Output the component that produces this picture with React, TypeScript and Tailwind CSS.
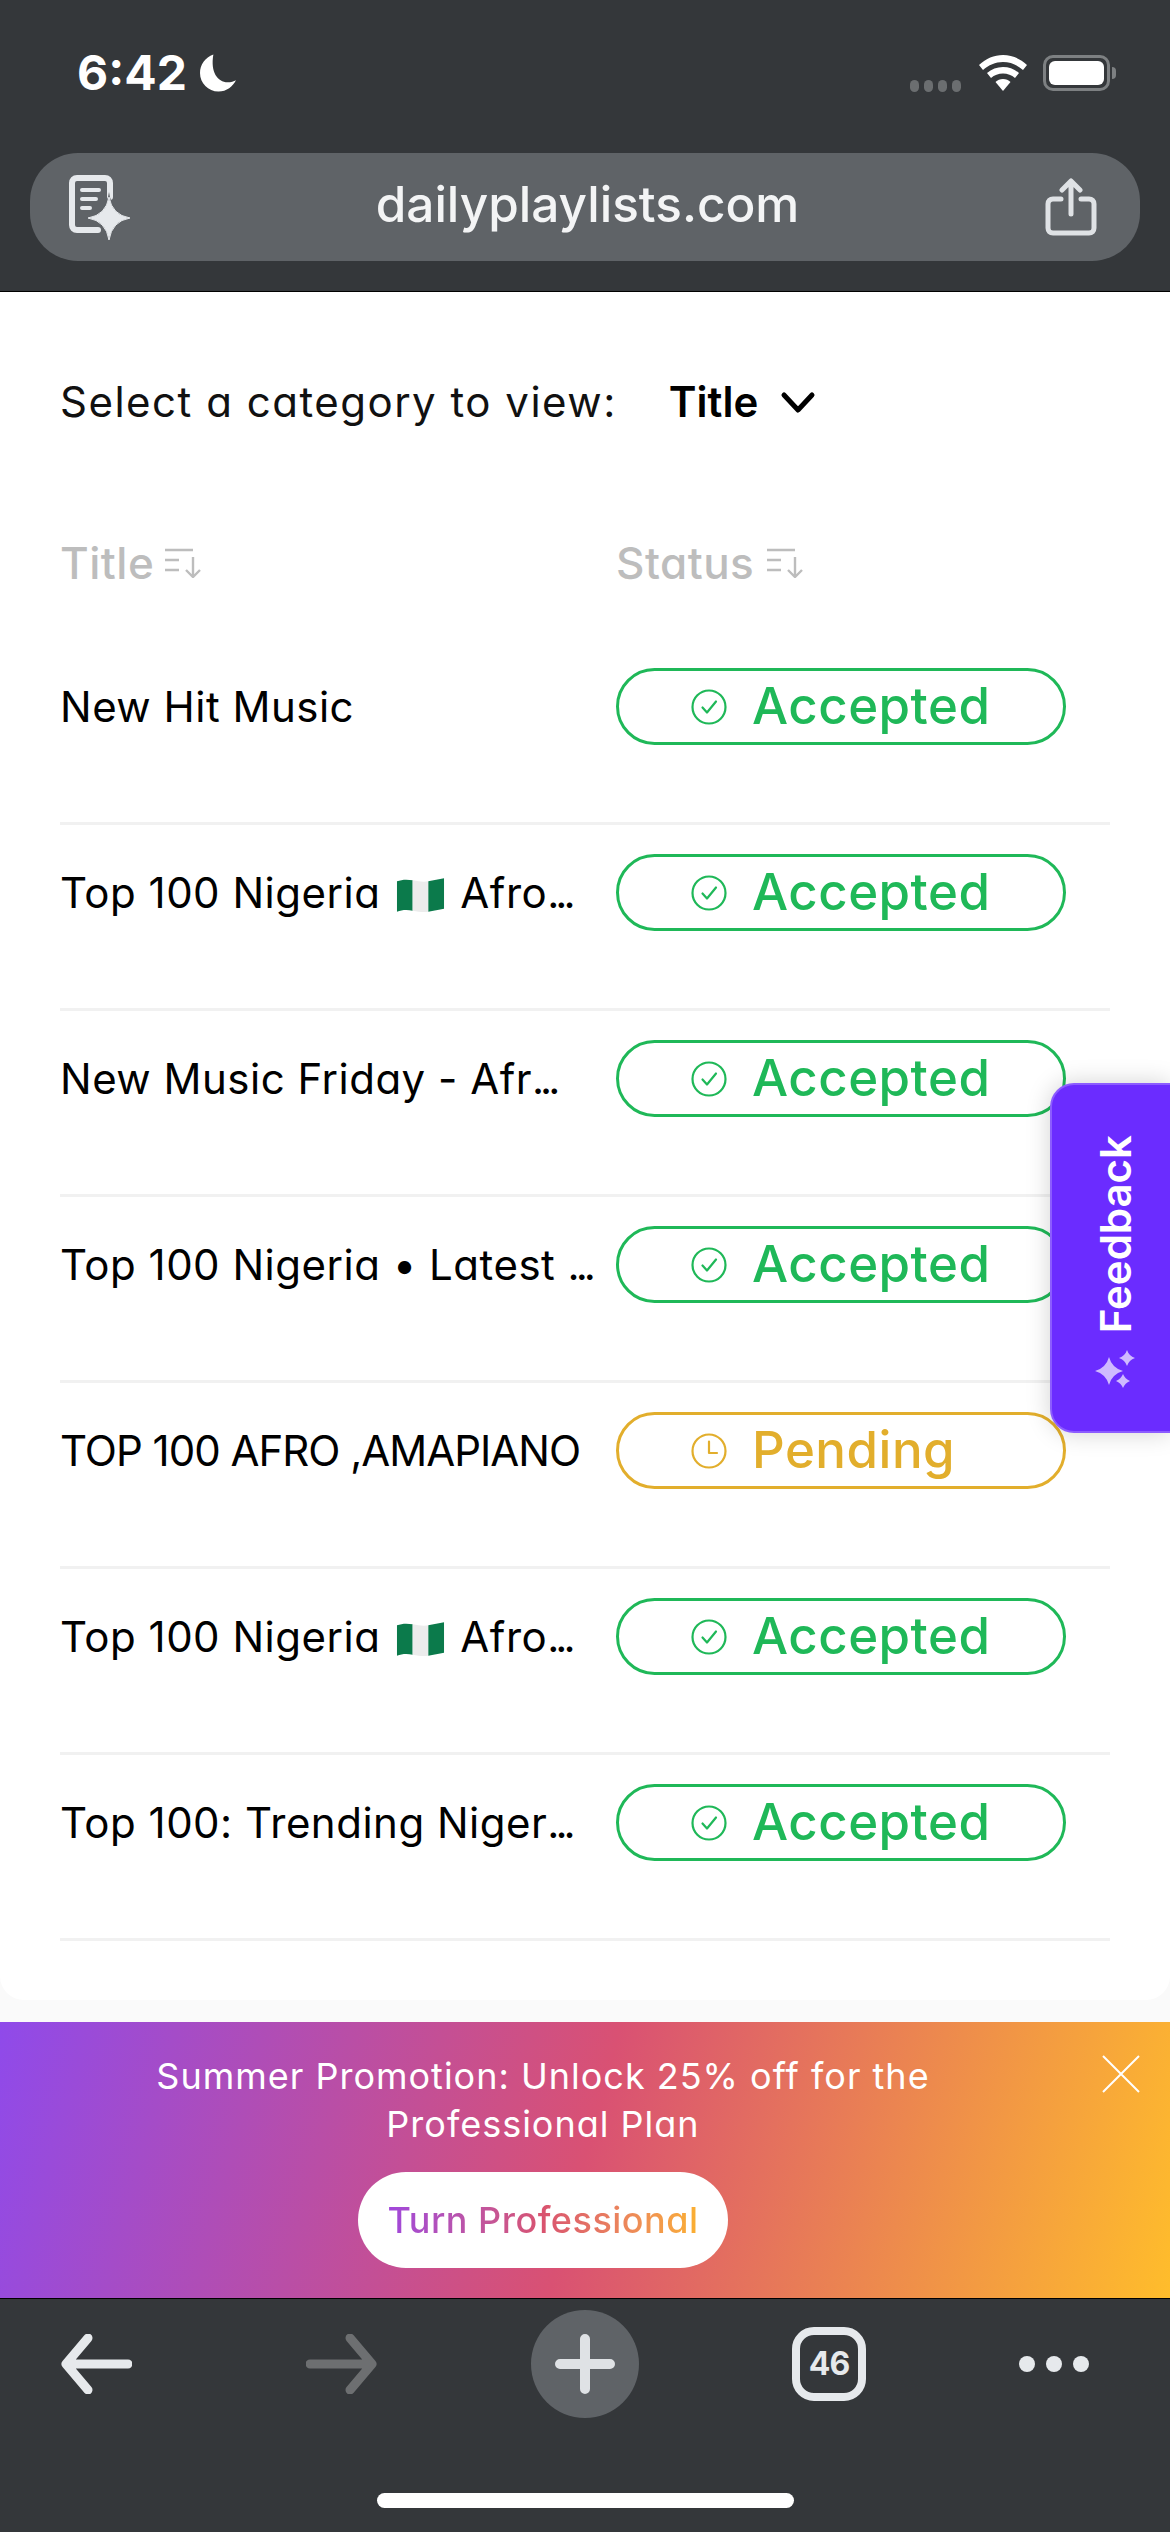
type Row = {
  title: string;
  status: "Accepted" | "Pending";
  flag?: string;
  caps?: boolean;
  cut?: boolean;
};

const rows: Row[] = [
  { title: "New Hit Music", status: "Accepted" },
  { title: "Top 100 Nigeria", flag: "Afro", cut: true, status: "Accepted" },
  { title: "New Music Friday - Afr", cut: true, status: "Accepted" },
  { title: "Top 100 Nigeria • Latest ", cut: true, status: "Accepted" },
  { title: "TOP 100 AFRO ,AMAPIANO", status: "Pending", caps: true },
  { title: "Top 100 Nigeria", flag: "Afro", cut: true, status: "Accepted" },
  { title: "Top 100: Trending Niger", cut: true, status: "Accepted" },
];

const poppinsish = "font-['Inter',sans-serif] [font-feature-settings:'cv11']";
const plainInter = "font-['Inter',sans-serif] [font-feature-settings:normal]";

const SortIcon = () => (
  <svg width="38" height="30" viewBox="0 0 38 30" fill="none" stroke="#bdbdbd" strokeWidth="2.4">
    <path d="M0 2h28M0 12h14M0 22h14" />
    <path d="M28 9v20M21 22l7 7 7-7" />
  </svg>
);

const CheckIcon = () => (
  <svg width="36" height="36" viewBox="0 0 36 36" fill="none" stroke="#1fb858" strokeWidth="2.2">
    <circle cx="18" cy="18" r="16.5" />
    <path d="M11.5 18.5l4.5 5 9-11" strokeLinecap="round" strokeLinejoin="round" />
  </svg>
);

const ClockIcon = () => (
  <svg width="36" height="36" viewBox="0 0 36 36" fill="none" stroke="#e2ae2c" strokeWidth="2.2">
    <circle cx="18" cy="18" r="16.5" />
    <path d="M18 8.5V20h8" strokeLinecap="round" strokeLinejoin="round" />
  </svg>
);

const NigeriaFlag = () => (
  <svg width="49" height="36" viewBox="0 0 50 36" className="mr-[15px] ml-[16px] inline-block align-[-6px]">
    <path d="M1 3c5-2 11-2 16-1v31c-5-1-11-1-16 1z" fill="#0b7a4b" />
    <path d="M17 2c6 1 11 2 16 1v31c-5 1-10 0-16-1z" fill="#ececec" />
    <path d="M33 3c5-1 11-2 16-3v31c-5 1-11 2-16 3z" fill="#0b7a4b" />
  </svg>
);

const StatusPill = ({ status }: { status: Row["status"] }) => {
  const accepted = status === "Accepted";
  return (
    <div
      className={`flex h-[77px] w-[450px] shrink-0 items-center gap-[25px] rounded-full border-[3px] pl-[72px] ${
        accepted ? "border-[#1fb858] text-[#1fb858]" : "border-[#e2ae2c] text-[#e2ae2c]"
      }`}
    >
      {accepted ? <CheckIcon /> : <ClockIcon />}
      <span className="-mt-[2px] text-[51px] leading-none font-medium tracking-[0.5px]">{status}</span>
    </div>
  );
};

const StatusBar = () => (
  <div className="flex h-[153px] items-start justify-between pt-[45px] pr-[54px] pl-[77px]">
    <div className="flex items-center gap-[13px]">
      <span className={`${plainInter} text-[48px] leading-[56px] font-bold text-white`}>6:42</span>
      <svg width="37" height="38" viewBox="0 0 36 36" fill="#fff">
        <path d="M13 0C5 3 0 10 0 18c0 10 8 18 18 18 8 0 14-5 17-11-2 1-5 2-8 2C17 27 10 17 13 0z" />
      </svg>
    </div>
    <div className="flex items-center gap-[16px] pt-[9px]">
      <div className="mt-[26px] mr-[2px] flex gap-[5px]">
        {[0, 1, 2, 3].map((i) => (
          <span key={i} className="h-[12px] w-[9px] rounded-full bg-[#6b6e70]" />
        ))}
      </div>
      <svg width="48" height="36" viewBox="0 0 48 36" fill="#fff">
        <path d="M24 0c9 0 17 3.500 24 10l-4 5c-5.500-5-12.500-8-20-8S9.500 10 4 15L0 10C7 3.500 15 0 24 0z" />
        <path d="M24 12c6 0 11.500 2 16 6l-4 5c-3.300-2.800-7.500-4.400-12-4.400S15.300 20.200 12 23l-4-5c4.500-4 10-6 16-6z" />
        <path d="M24 24c3 0 5.500 1 7.500 3L24 36l-7.500-9c2-2 4.500-3 7.500-3z" />
      </svg>
      <div className="flex items-center">
        <div className="h-[36px] w-[67px] rounded-[10px] border-[3px] border-[#7d8082] p-[3px]">
          <div className="h-full w-full rounded-[6px] bg-white" />
        </div>
        <div className="ml-[2px] h-[12px] w-[4px] rounded-r-full bg-[#7d8082]" />
      </div>
    </div>
  </div>
);

const UrlBar = () => (
  <div className="mx-[30px] flex h-[108px] items-center justify-between rounded-[48px] bg-[#5f6367] pr-[43px] pl-[38px]">
    <svg width="62" height="66" viewBox="0 0 62 66" fill="none">
      <path
        d="M30 56H9c-3 0-5-2-5-5V9c0-3 2-5 5-5h28c3 0 5 2 5 5v14"
        stroke="#e6e9ec"
        strokeWidth="6"
        strokeLinecap="round"
      />
      <path d="M14 16h17M14 25h14M14 34h8" stroke="#e6e9ec" strokeWidth="4" strokeLinecap="round" />
      <path d="M41 18Q44 41 66 44 44 47 41 70 38 47 16 44 38 41 41 18z" fill="#5f6367" />
      <path d="M41 23Q44 41 62 44 44 47 41 66 38 47 20 44 38 41 41 23z" fill="#e6e9ec" stroke="#e6e9ec" />
    </svg>
    <span className={`${plainInter} mb-[4px] text-[49.5px] leading-none font-medium text-[#f3f4f5]`}>
      dailyplaylists.com
    </span>
    <svg width="52" height="58" viewBox="0 0 52 58" fill="none" stroke="#dfe2e5" strokeWidth="5" strokeLinecap="round" strokeLinejoin="round">
      <path d="M16 21H8c-3 0-5 2-5 5v24c0 3 2 5 5 5h36c3 0 5-2 5-5V26c0-3-2-5-5-5h-8" />
      <path d="M26 36V4M17 12l9-9 9 9" />
    </svg>
  </div>
);

const BottomNav = () => (
  <div className="relative h-[234px] border-t-[1px] border-black bg-[#34373a]">
    <div className="flex h-[130px] items-center gap-[153px] pl-[60px]">
      <svg width="72" height="60" viewBox="0 0 72 60" fill="none" stroke="#e6e9ec" strokeWidth="9" strokeLinecap="round" strokeLinejoin="round">
        <path d="M68 30H6M28 4L6 30l22 26" />
      </svg>
      <svg width="72" height="60" viewBox="0 0 72 60" fill="none" stroke="#6d6f71" strokeWidth="9" strokeLinecap="round" strokeLinejoin="round" className="ml-[21px]">
        <path d="M4 30h62M44 4l22 26-22 26" />
      </svg>
      <div className="flex h-[108px] w-[108px] items-center justify-center rounded-full bg-[#5f6367]">
        <svg width="60" height="60" viewBox="0 0 60 60" stroke="#dfe2e5" strokeWidth="10" strokeLinecap="round">
          <path d="M30 5v50M5 30h50" />
        </svg>
      </div>
      <div className={`${plainInter} flex h-[74px] w-[74px] items-center justify-center rounded-[22px] border-[8px] border-[#e6e9ec] text-[32px] leading-none font-bold tracking-[-1px] text-[#e6e9ec]`}>
        46
      </div>
      <div className="flex gap-[11px]">
        {[0, 1, 2].map((i) => (
          <span key={i} className="h-[16px] w-[16px] rounded-full bg-[#e6e9ec]" />
        ))}
      </div>
    </div>
    <div className="absolute bottom-[24px] left-[377px] h-[15px] w-[417px] rounded-full bg-white" />
  </div>
);

const PromoBanner = () => (
  <div className="relative h-[276px] bg-linear-[105deg] from-[#8f4aea] via-[#d95173] to-[#ffbd2b] pt-[30px]">
    <p className="mx-auto w-[820px] -translate-x-[42px] text-center text-[36px] leading-[48px] tracking-[1px] text-white">
      Summer Promotion: Unlock 25% off for the
      <br />
      Professional Plan
    </p>
    <div className="mx-auto mt-[24px] flex h-[96px] w-[370px] -translate-x-[42px] items-center justify-center rounded-full bg-white">
      <span className="bg-linear-to-r from-[#a046dc] via-[#d9536f] to-[#fbb02f] bg-clip-text text-[36px] leading-[44px] font-medium tracking-[0.5px] text-transparent">
        Turn Professional
      </span>
    </div>
    <svg width="38" height="38" viewBox="0 0 38 38" stroke="#fff" strokeWidth="2" className="absolute top-[33px] right-[30px]">
      <path d="M1 1l36 36M37 1L1 37" />
    </svg>
  </div>
);

const FeedbackTab = () => (
  <div className="absolute top-[1083px] right-0 flex h-[350px] w-[120px] flex-col items-center rounded-l-[24px] border-[2px] border-r-0 border-[#8c5cff] bg-[#6b2cff] pt-[50px] shadow-[0_0_24px_rgba(0,0,0,0.18)]">
    <span className={`${plainInter} translate-x-[5px] rotate-180 text-[42px] leading-[48px] font-semibold text-white [writing-mode:vertical-rl]`}>
      Feedback
    </span>
    <svg width="42" height="42" viewBox="0 0 42 42" fill="#cfbaff" className="mt-[16px] translate-x-[4px]">
      <path d="M15 8Q18 19 29 22 18 25 15 36 12 25 1 22 12 19 15 8z" />
      <path d="M33 1Q35 7 41 9 35 11 33 17 31 11 25 9 31 7 33 1z" />
      <path d="M29 25Q31 30 36 32 31 34 29 39 27 34 22 32 27 30 29 25z" />
    </svg>
  </div>
);

export default function App() {
  return (
    <div className={`relative flex h-[2532px] w-[1170px] flex-col overflow-hidden bg-[#fafafa] ${poppinsish}`}>
      <div className="h-[292px] border-b-[1px] border-black bg-[#34373a]">
        <StatusBar />
        <UrlBar />
      </div>

      <div className="flex-1">
        <div className="rounded-b-[24px] bg-white px-[60px] pb-[59px]">
          <div className="flex h-[218px] items-center text-[42px]">
            <span className="tracking-[1.5px] text-[#111]">Select a category to view:</span>
            <span className="ml-[52px] font-semibold text-black">Title</span>
            <svg width="36" height="24" viewBox="0 0 36 24" fill="none" stroke="#000" strokeWidth="5" strokeLinecap="round" strokeLinejoin="round" className="mt-[4px] ml-[22px]">
              <path d="M4 4l14 15L32 4" />
            </svg>
          </div>

          <div className="flex h-[129px] items-start pt-[31px] text-[44px] leading-[44px] font-medium tracking-[0.5px] text-[#bdbdbd]">
            <div className="flex w-[556px] items-center gap-[11px]">
              Title <SortIcon />
            </div>
            <div className="flex items-center gap-[13px]">
              Status <SortIcon />
            </div>
          </div>

          {rows.map((row, i) => (
            <div key={i} className="flex h-[186px] items-start border-b-[3px] border-[#f1f1f1] pt-[29px]">
              <div className="flex h-[77px] w-[556px] shrink-0 items-center">
                <p className={`w-[545px] truncate whitespace-pre text-[42px] text-black ${row.caps ? "tracking-[-1px]" : "tracking-[0.5px]"}`}>
                  {row.title}
                  {row.flag && <NigeriaFlag />}
                  {row.flag}
                  {row.cut && <span className="tracking-[-4px]">...</span>}
                </p>
              </div>
              <StatusPill status={row.status} />
            </div>
          ))}
        </div>
      </div>

      <PromoBanner />
      <BottomNav />
      <FeedbackTab />
    </div>
  );
}
